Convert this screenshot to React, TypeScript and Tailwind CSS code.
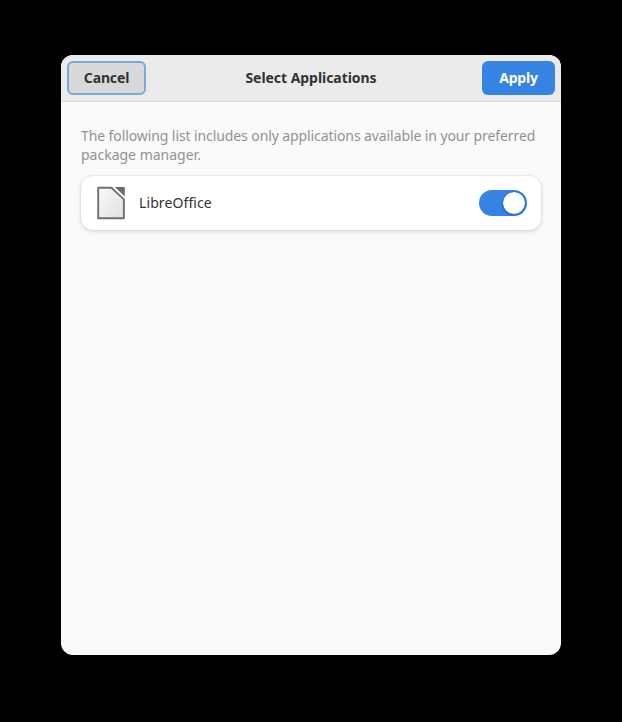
function DocumentIcon() {
  return (
    <svg className="h-[34px] w-8 shrink-0" viewBox="0 0 32 34" fill="none" aria-hidden="true">
      <defs>
        <linearGradient id="paper" x1="0" y1="0" x2="1" y2="1">
          <stop offset="0" stopColor="#ffffff" />
          <stop offset="0.1" stopColor="#f7f7f7" />
          <stop offset="1" stopColor="#e0e0e0" />
        </linearGradient>
      </defs>
      <path
        d="M3.2 1.7H16.4L28.9 13.4V32.2H3.2Z"
        fill="url(#paper)"
        stroke="#707070"
        strokeWidth="1.9"
        strokeLinejoin="round"
      />
      <path d="M19.8 .9H29Q29.8 .9 29.8 1.7V10.5Z" fill="#6c6c6c" />
    </svg>
  );
}

function Toggle() {
  return (
    <button
      role="switch"
      aria-checked="true"
      aria-label="LibreOffice"
      className="flex h-[26px] w-12 items-center justify-end rounded-full bg-[#3584e4] px-px"
    >
      <span className="h-6 w-6 rounded-full border border-[#2b76d3] bg-white bg-clip-padding shadow-[0_1px_2px_rgba(0,0,0,0.15)]" />
    </button>
  );
}

export default function App() {
  return (
    <div className="flex h-[722px] w-[622px] items-start justify-center bg-black pt-[55px] font-['Noto_Sans',sans-serif] text-[14px] text-[#333333]">
      <main className="h-[600px] w-[500px] overflow-hidden rounded-[12px] bg-[#fafafa]">
        <header className="grid h-[47px] grid-cols-[1fr_auto_1fr] items-center border-b border-[#dcdcdc] bg-[#ebebeb] px-[6px] font-bold">
          <button className="h-[34px] w-[79px] rounded-[6px] border-2 border-[#79a7df] bg-[#d9d9d9] pb-[2px] tracking-[-0.15px]">
            Cancel
          </button>
          <h1 className="pb-[2px] tracking-[-0.05px]">Select Applications</h1>
          <button className="h-[34px] w-[73px] justify-self-end rounded-[6px] bg-[#3584e4] pb-[2px] tracking-[-0.2px] text-white">
            Apply
          </button>
        </header>
        <section className="px-5 pt-6">
          <p className="whitespace-nowrap leading-[19px] text-[#929292]">
            <span className="tracking-[-0.095px]">
              The following list includes only applications available in your preferred
            </span>
            <br />
            package manager.
          </p>
          <div className="mt-3 flex h-[54px] items-center rounded-[12px] bg-white px-[14px] shadow-[0_0_0_1px_rgba(0,0,0,0.03),0_1px_3px_1px_rgba(0,0,0,0.07),0_2px_6px_2px_rgba(0,0,0,0.03)]">
            <DocumentIcon />
            <span className="ml-3 flex-1 pb-[2px] tracking-[0.1px]">LibreOffice</span>
            <Toggle />
          </div>
        </section>
      </main>
    </div>
  );
}
